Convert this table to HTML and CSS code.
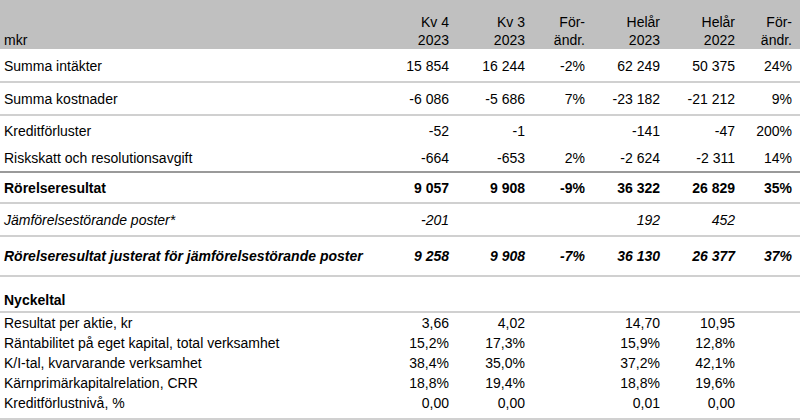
FILE: index.html
```html
<!DOCTYPE html>
<html lang="sv">
<head>
<meta charset="utf-8">
<link rel="stylesheet" href="styles.css">
</head>
<body>
<table class="fin">
  <colgroup>
    <col class="c-label">
    <col class="c-kv4">
    <col class="c-kv3">
    <col class="c-ch1">
    <col class="c-h23">
    <col class="c-h22">
    <col class="c-ch2">
  </colgroup>
  <thead>
    <tr class="head">
      <th class="label">mkr</th>
      <th>Kv 4<br>2023</th>
      <th>Kv 3<br>2023</th>
      <th>För-<br>ändr.</th>
      <th>Helår<br>2023</th>
      <th>Helår<br>2022</th>
      <th>För-<br>ändr.</th>
    </tr>
  </thead>
  <tbody>
    <tr class="r1 line">
      <td class="label">Summa intäkter</td>
      <td>15 854</td><td>16 244</td><td>-2%</td><td>62 249</td><td>50 375</td><td>24%</td>
    </tr>
    <tr class="r2 line">
      <td class="label">Summa kostnader</td>
      <td>-6 086</td><td>-5 686</td><td>7%</td><td>-23 182</td><td>-21 212</td><td>9%</td>
    </tr>
    <tr class="r3">
      <td class="label">Kreditförluster</td>
      <td>-52</td><td>-1</td><td></td><td>-141</td><td>-47</td><td>200%</td>
    </tr>
    <tr class="r4 dark">
      <td class="label">Riskskatt och resolutionsavgift</td>
      <td>-664</td><td>-653</td><td>2%</td><td>-2 624</td><td>-2 311</td><td>14%</td>
    </tr>
    <tr class="r5 line bold">
      <td class="label">Rörelseresultat</td>
      <td>9 057</td><td>9 908</td><td>-9%</td><td>36 322</td><td>26 829</td><td>35%</td>
    </tr>
    <tr class="r6 line ital">
      <td class="label">Jämförelsestörande poster*</td>
      <td>-201</td><td></td><td></td><td>192</td><td>452</td><td></td>
    </tr>
    <tr class="r7 line bold ital">
      <td class="label">Rörelseresultat justerat för jämförelsestörande poster</td>
      <td>9 258</td><td>9 908</td><td>-7%</td><td>36 130</td><td>26 377</td><td>37%</td>
    </tr>
    <tr class="r8 line bold">
      <td class="label">Nyckeltal</td>
      <td></td><td></td><td></td><td></td><td></td><td></td>
    </tr>
    <tr class="kt">
      <td class="label">Resultat per aktie, kr</td>
      <td>3,66</td><td>4,02</td><td></td><td>14,70</td><td>10,95</td><td></td>
    </tr>
    <tr class="kt">
      <td class="label">Räntabilitet på eget kapital, total verksamhet</td>
      <td>15,2%</td><td>17,3%</td><td></td><td>15,9%</td><td>12,8%</td><td></td>
    </tr>
    <tr class="kt">
      <td class="label">K/I-tal, kvarvarande verksamhet</td>
      <td>38,4%</td><td>35,0%</td><td></td><td>37,2%</td><td>42,1%</td><td></td>
    </tr>
    <tr class="kt">
      <td class="label">Kärnprimärkapitalrelation, CRR</td>
      <td>18,8%</td><td>19,4%</td><td></td><td>18,8%</td><td>19,6%</td><td></td>
    </tr>
    <tr class="kt last line">
      <td class="label">Kreditförlustnivå, %</td>
      <td>0,00</td><td>0,00</td><td></td><td>0,01</td><td>0,00</td><td></td>
    </tr>
  </tbody>
</table>
</body>
</html>
```

FILE: styles.css
```css
html, body {
  margin: 0;
  padding: 0;
  background: #ffffff;
}

body {
  font-family: "Liberation Sans", Arial, sans-serif;
  font-size: 14px;
  color: #000000;
  width: 800px;
  height: 420px;
  overflow: hidden;
}

.fin {
  width: 800px;
  border-collapse: collapse;
  table-layout: fixed;
}

.c-label { width: 380px; }
.c-kv4 { width: 69px; }
.c-kv3 { width: 76px; }
.c-ch1 { width: 60px; }
.c-h23 { width: 75px; }
.c-h22 { width: 75px; }
.c-ch2 { width: 65px; }

.fin th,
.fin td {
  padding: 0;
  text-align: right;
  white-space: nowrap;
  line-height: 18px;
}

.fin td:last-child,
.fin th:last-child {
  padding-right: 8px;
}

.fin .label {
  text-align: left;
  padding-left: 4px;
}

.head th {
  background: #c0c0c0;
  font-weight: normal;
  height: 49px;
  vertical-align: bottom;
  padding-bottom: 0;
}

.line td {
  border-bottom: 2px solid #d0d0d0;
}

.dark td {
  border-bottom: 2px solid #9a9a9a;
}

.bold td { font-weight: bold; }
.ital td { font-style: italic; }

.r1 td { height: 30px; padding-top: 2px; }
.r2 td { height: 31px; }
.r3 td { height: 27px; padding-top: 1px; }
.r4 td { height: 27px; }
.r5 td { height: 29px; }
.r6 td { height: 31px; }
.r7 td { height: 38px; }
.r8 td { height: 32px; vertical-align: bottom; padding-bottom: 2px; }
.kt td { height: 20px; line-height: 20px; }
.kt.last td { vertical-align: top; height: 20px; padding-bottom: 5px; }
```
